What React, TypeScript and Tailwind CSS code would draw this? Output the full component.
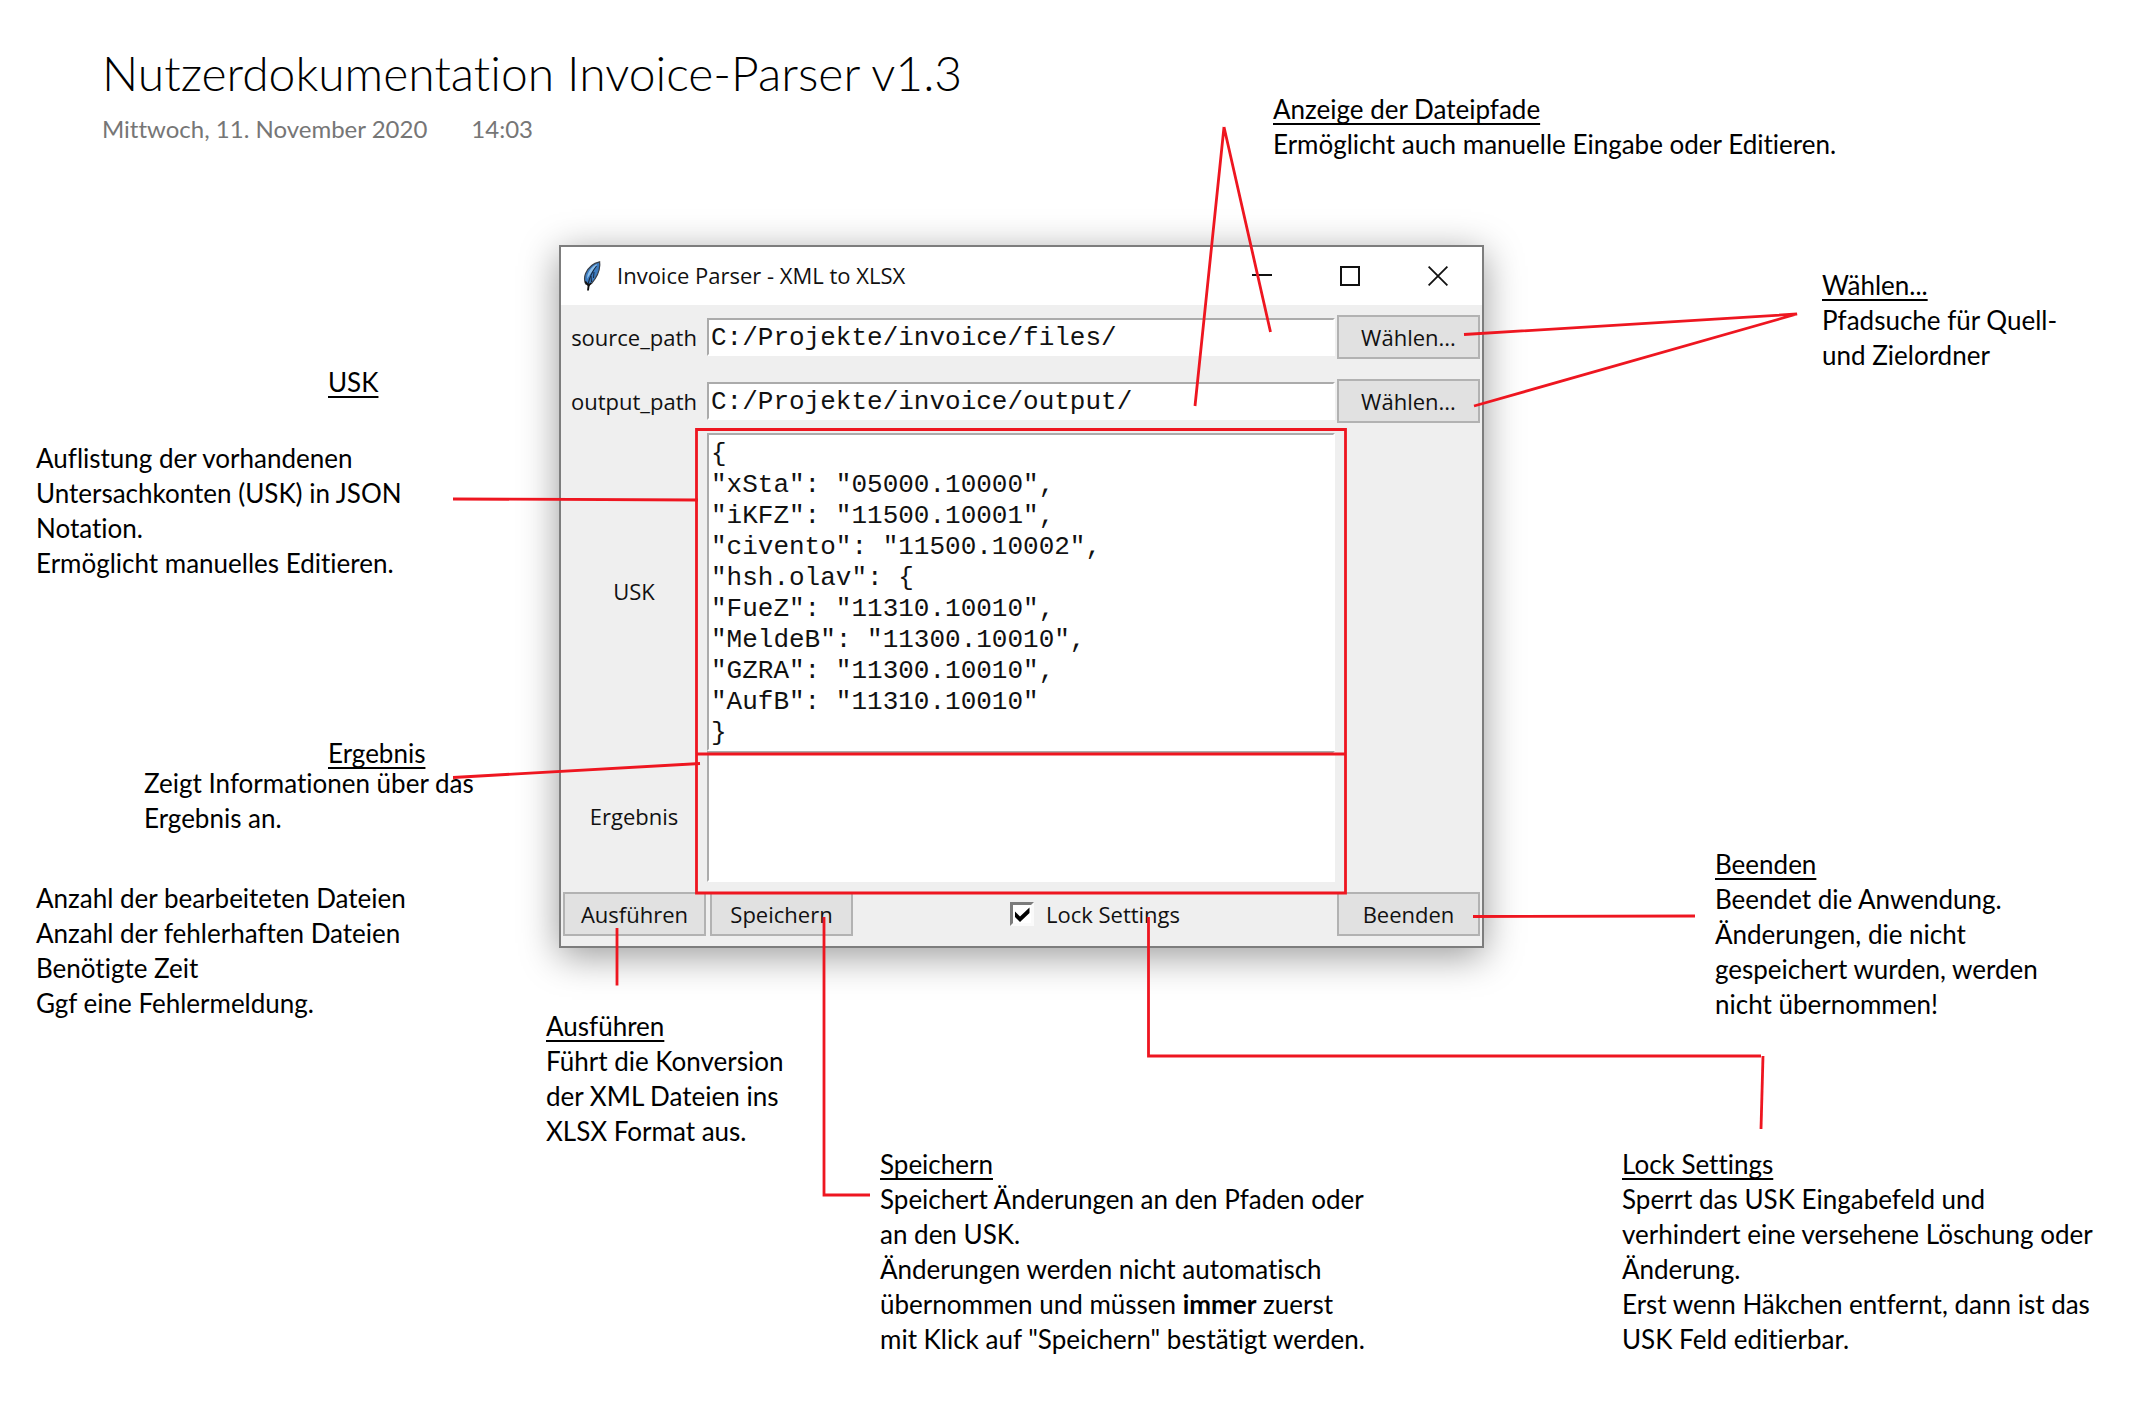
import React from "react";

const USK_JSON = `{
"xSta": "05000.10000",
"iKFZ": "11500.10001",
"civento": "11500.10002",
"hsh.olav": {
"FueZ": "11310.10010",
"MeldeB": "11300.10010",
"GZRA": "11300.10010",
"AufB": "11310.10010"
}`;

function Note({
  className,
  title,
  lines = [],
}: {
  className: string;
  title?: string;
  lines?: React.ReactNode[];
}) {
  return (
    <section className={`absolute w-max ${className}`}>
      {title && (
        <h2 className="underline decoration-2 underline-offset-4 [text-decoration-skip-ink:none]">
          {title}
        </h2>
      )}
      {lines.map((line, i) => (
        <p key={i}>{line}</p>
      ))}
    </section>
  );
}

function Feather() {
  return (
    <svg viewBox="0 0 18 30" className="h-[30px] w-[18px]" aria-hidden="true">
      <path
        d="M16.6 .8C11 2 5.400 6 2.600 12.500C1.200 16 1.400 20 2.600 22.800L5 24L8.500 22.500C12.500 18 16.500 11 16.800 4Z"
        fill="#3d7cc0"
        stroke="#3a3f47"
        strokeWidth="1.200"
      />
      <path d="M14 3C9.500 5.500 6 9 4.500 14L4 18L8 12L13 6Z" fill="#8fc0ea" />
      <path d="M13.500 5C9.500 10 6.500 16 5 23.500" fill="none" stroke="#16263c" strokeWidth="1.100" />
      <path d="M8 15L8.500 21M11 11L10.500 17" stroke="#16263c" strokeWidth="1" />
      <path d="M2.200 20.500L5.600 24.500L5 29.500" fill="none" stroke="#111" strokeWidth="1.900" />
      <path d="M8 22L5.400 25" stroke="#111" strokeWidth="1.700" />
    </svg>
  );
}

function PushButton({ children }: { children: React.ReactNode }) {
  return (
    <button
      type="button"
      className="flex h-11 w-[143px] shrink-0 items-center justify-center border-2 border-[#b2b2b2] bg-[#e1e1e1]"
    >
      {children}
    </button>
  );
}

function PathRow({ id, value }: { id: string; value: string }) {
  return (
    <div className="grid h-16 grid-cols-[146px_1fr_147px] items-center">
      <label htmlFor={id} className="text-center">
        {id}
      </label>
      <input
        id={id}
        defaultValue={value}
        className="h-[38px] w-full min-w-0 border-2 border-r-white border-b-white border-l-[#ababab] border-t-[#ababab] bg-white pt-0.5 pl-0.5 font-['Liberation_Mono',monospace] text-[26px] outline-none"
      />
      <div className="flex justify-center">
        <PushButton>Wählen...</PushButton>
      </div>
    </div>
  );
}

function ParserWindow() {
  return (
    <div className="absolute top-[245px] left-[559px] w-[925px] border-2 border-[#7d7d7d] bg-[#efefef] font-['Open_Sans',sans-serif] text-[22px] leading-[30px] text-[#111] shadow-[0_8px_36px_rgba(0,0,0,0.4)]">
      <div className="flex h-[58px] items-center bg-white pl-[22px]">
        <Feather />
        <span className="flex-1 pb-0.5 pl-4">Invoice Parser - XML to XLSX</span>
        <button type="button" aria-label="Minimieren" className="flex h-full w-[88px] items-center justify-center">
          <svg viewBox="0 0 20 20" className="size-5" fill="none" stroke="#111" strokeWidth="2">
            <path d="M0 9H20" />
          </svg>
        </button>
        <button type="button" aria-label="Maximieren" className="flex h-full w-[88px] items-center justify-center">
          <svg viewBox="0 0 20 20" className="size-5" fill="none" stroke="#111" strokeWidth="2">
            <path d="M1 1H19V19H1Z" />
          </svg>
        </button>
        <button type="button" aria-label="Schließen" className="flex h-full w-[88px] items-center justify-center">
          <svg viewBox="0 0 20 20" className="size-5" fill="none" stroke="#111" strokeWidth="1.800">
            <path d="M.6 .6L19.400 19.400M19.400 .6L.6 19.400" />
          </svg>
        </button>
      </div>

      <PathRow id="source_path" value="C:/Projekte/invoice/files/" />
      <PathRow id="output_path" value="C:/Projekte/invoice/output/" />

      <div className="grid grid-cols-[146px_1fr_147px] items-center">
        <label htmlFor="usk" className="pb-0.5 text-center">
          USK
        </label>
        <textarea
          id="usk"
          rows={10}
          defaultValue={USK_JSON}
          className="block h-[318px] w-full resize-none overflow-hidden border-2 border-r-white border-b-white border-l-[#ababab] border-t-[#ababab] bg-white px-0.5 pt-1 font-['Liberation_Mono',monospace] text-[26px] leading-[31px] outline-none"
        />
      </div>
      <div className="grid grid-cols-[146px_1fr_147px] items-center">
        <label htmlFor="ergebnis" className="pb-0.5 text-center">
          Ergebnis
        </label>
        <textarea
          id="ergebnis"
          className="block h-[131px] w-full resize-none overflow-hidden border-2 border-r-white border-b-white border-l-[#ababab] border-t-[#ababab] bg-white px-0.5 pt-1 outline-none"
        />
      </div>

      <div className="flex items-center gap-1 px-0.5 py-2.5">
        <PushButton>Ausführen</PushButton>
        <PushButton>Speichern</PushButton>
        <label className="flex flex-1 items-center justify-center gap-3">
          <span className="relative flex size-6">
            <input
              type="checkbox"
              defaultChecked
              className="peer size-6 appearance-none border-3 border-r-[#fafafa] border-b-[#fafafa] border-l-[#7c7c7c] border-t-[#7c7c7c] bg-white"
            />
            <svg
              viewBox="0 0 24 24"
              className="pointer-events-none absolute inset-0 hidden size-6 peer-checked:block"
              aria-hidden="true"
            >
              <path d="M5 9.500V15L10 20L19.500 11V5.500L10 14.500Z" fill="#000" />
            </svg>
          </span>
          Lock Settings
        </label>
        <PushButton>Beenden</PushButton>
      </div>
    </div>
  );
}

function Markers() {
  return (
    <svg
      className="pointer-events-none absolute top-0 left-0 size-px overflow-visible"
      fill="none"
      stroke="#ee1620"
      strokeWidth="2.800"
      aria-hidden="true"
    >
      <path d="M696.500 429.500H1345.500V893H696.500ZM696.500 754H1345.500" />
      <path d="M1195 406L1224 127M1224 127L1270.500 332" />
      <path d="M1464 334.500L1797 314L1474 406" />
      <path d="M453 499L698 500" />
      <path d="M453 777.500L700 763.500" />
      <path d="M617 928V985.500" />
      <path d="M824 917V1195H870" />
      <path d="M1148.500 917V1056H1761" />
      <path d="M1763 1056L1761 1129" />
      <path d="M1473 916.500L1695 916" />
    </svg>
  );
}

export default function App() {
  return (
    <main className="relative min-h-screen overflow-hidden bg-white font-['Lato',sans-serif] text-[26px] leading-[35px] text-black [font-variant-ligatures:no-common-ligatures]">
      <header className="pt-11 pl-[102px]">
        <h1 className="text-[48px] leading-[58px] font-light">Nutzerdokumentation Invoice-Parser v1.3</h1>
        <p className="flex gap-11 pt-2.5 text-[24px] leading-[34px] text-[#767676]">
          <span>Mittwoch, 11. November 2020</span>
          <span>14:03</span>
        </p>
      </header>

      <ParserWindow />

      <Note
        className="top-[92px] left-[1273px]"
        title="Anzeige der Dateipfade"
        lines={["Ermöglicht auch manuelle Eingabe oder Editieren."]}
      />
      <Note
        className="top-[268px] left-[1822px]"
        title="Wählen..."
        lines={["Pfadsuche für Quell-", "und Zielordner"]}
      />
      <Note className="top-[365px] left-[328px]" title="USK" />
      <Note
        className="top-[441px] left-[36px]"
        lines={[
          "Auflistung der vorhandenen",
          "Untersachkonten (USK) in JSON",
          "Notation.",
          "Ermöglicht manuelles Editieren.",
        ]}
      />
      <Note className="top-[736px] left-[328px]" title="Ergebnis" />
      <Note className="top-[766px] left-[144px]" lines={["Zeigt Informationen über das", "Ergebnis an."]} />
      <Note
        className="top-[881px] left-[36px]"
        lines={[
          "Anzahl der bearbeiteten Dateien",
          "Anzahl der fehlerhaften Dateien",
          "Benötigte Zeit",
          "Ggf eine Fehlermeldung.",
        ]}
      />
      <Note
        className="top-[1009px] left-[546px]"
        title="Ausführen"
        lines={["Führt die Konversion", "der XML Dateien ins", "XLSX Format aus."]}
      />
      <Note
        className="top-[1147px] left-[880px]"
        title="Speichern"
        lines={[
          "Speichert Änderungen an den Pfaden oder",
          "an den USK.",
          "Änderungen werden nicht automatisch",
          <>
            übernommen und müssen <strong className="font-bold">immer</strong> zuerst
          </>,
          'mit Klick auf "Speichern" bestätigt werden.',
        ]}
      />
      <Note
        className="top-[847px] left-[1715px]"
        title="Beenden"
        lines={["Beendet die Anwendung.", "Änderungen, die nicht", "gespeichert wurden, werden", "nicht übernommen!"]}
      />
      <Note
        className="top-[1147px] left-[1622px]"
        title="Lock Settings"
        lines={[
          "Sperrt das USK Eingabefeld und",
          "verhindert eine versehene Löschung oder",
          "Änderung.",
          "Erst wenn Häkchen entfernt, dann ist das",
          "USK Feld editierbar.",
        ]}
      />

      <Markers />
    </main>
  );
}
